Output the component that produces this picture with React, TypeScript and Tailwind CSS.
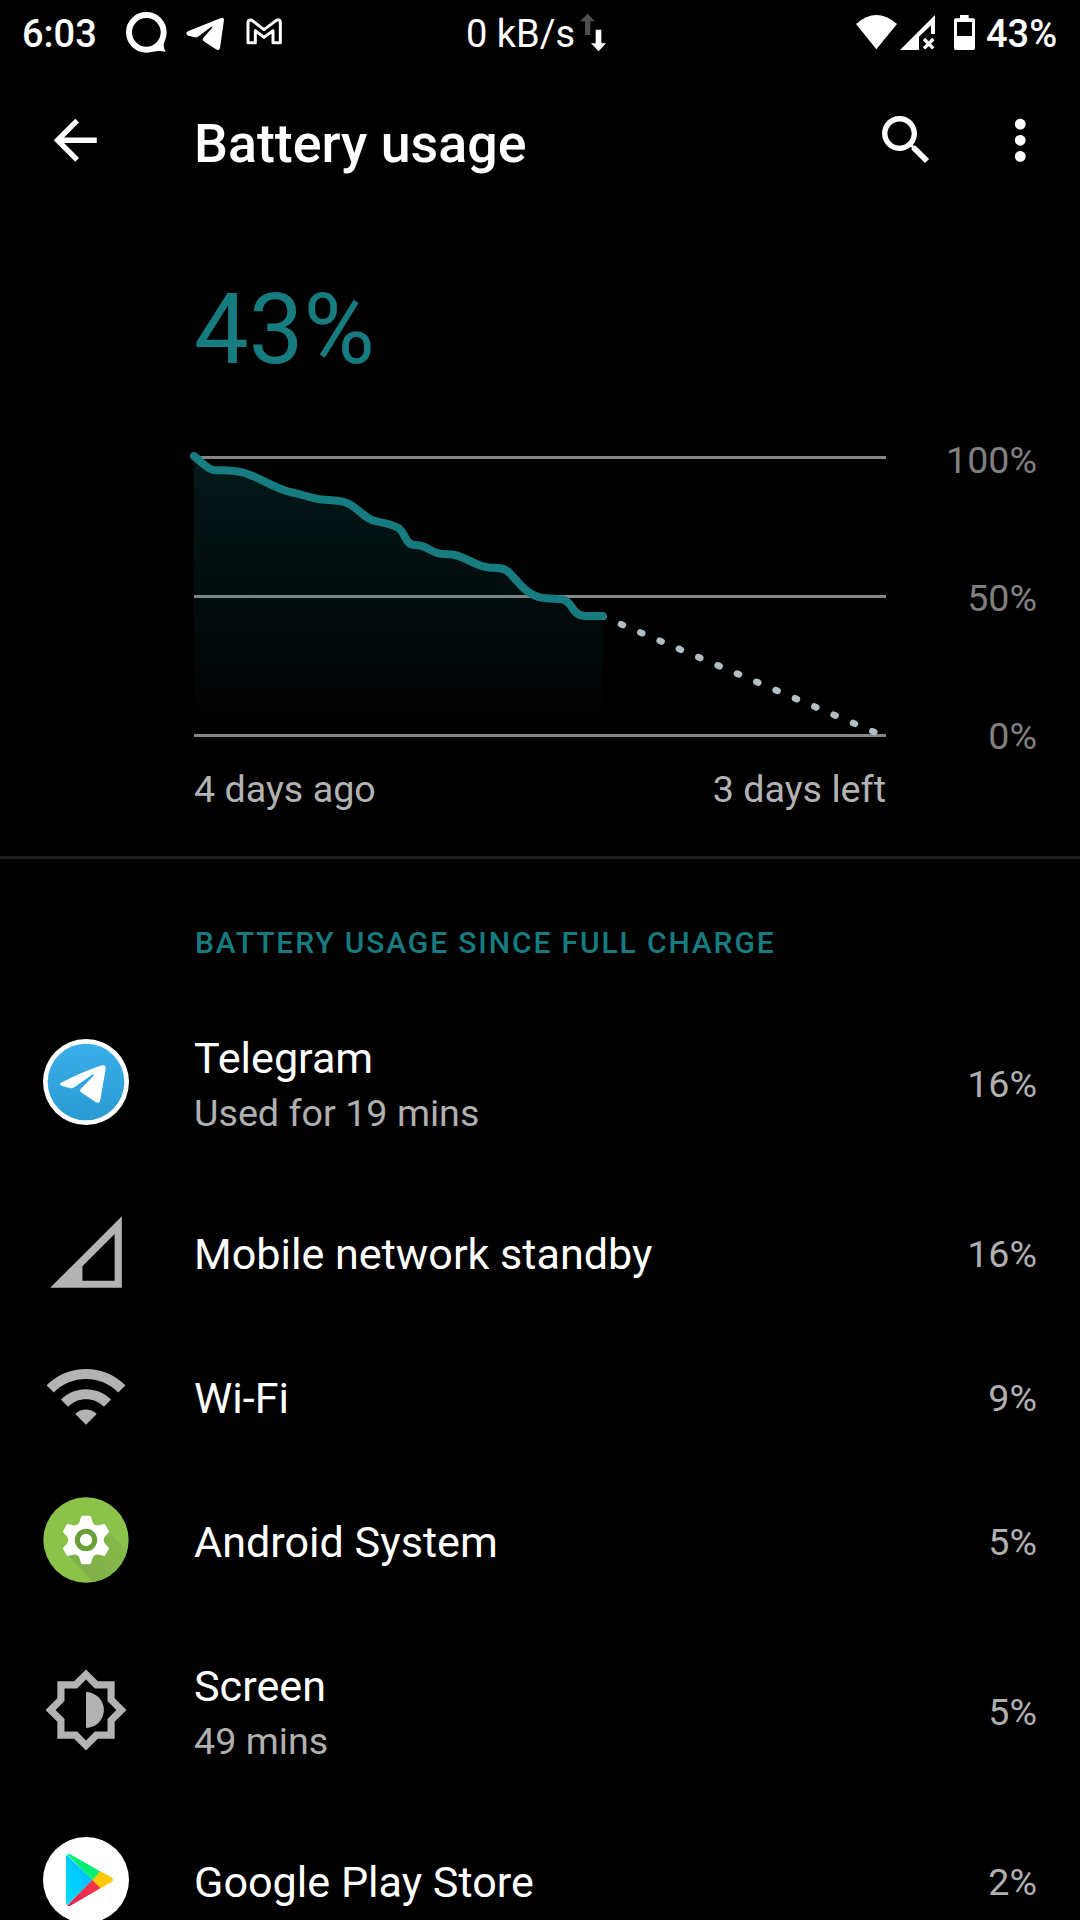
import React from "react";

const PLANE =
  "M560 97 C558 101 560 105 565 107 L585 112 Q591 113 596 109 L633 81 Q640 77 636 84 L609 115 Q606 120 611 124 L650 149 Q658 153 660 144 L672 60 Q672 51 663 54 L567 92 Q562 94 560 97Z";

function StatusBar() {
  return (
    <div className="flex h-[66px] items-center text-[38px] leading-[44px] text-white">
      <div className="ml-[22px] w-[103px] pt-[2px] font-medium">6:03</div>
      <div className="flex w-[341px] gap-[17px]">
        <svg className="h-[44px] w-[42px]" viewBox="375 33 126 132">
          <circle cx="439" cy="97" r="52" fill="none" stroke="#fff" strokeWidth="18" />
          <path d="M494 123 Q487 139 497 155 Q474 151 458 156 L470 133Z" fill="#fff" />
        </svg>
        <svg className="h-[44px] w-[42px]" viewBox="552 33 126 132">
          <path d={PLANE} fill="#fff" />
        </svg>
        <svg className="h-[44px] w-[42px]" viewBox="730 33 126 132">
          <path
            d="M745 67 Q745 60 752 60 L757 61 L793 89 L830 61 Q842 56 842 68 V128 H820 V92 L793 112 L767 92 V128 H745Z"
            fill="none"
            stroke="#fff"
            strokeWidth="9"
            strokeLinejoin="round"
          />
        </svg>
      </div>
      <div className="w-[113px] pt-[2px] whitespace-nowrap">0 kB/s</div>
      <svg className="h-[44px] w-[30px]" viewBox="420 33 90 132">
        <path d="M446 41 L468 64 H454 V105 H438 V64 H423Z" fill="#505050" />
        <path d="M470 89 H487 V130 H501 L479 154 L456 130 H470Z" fill="#fff" />
      </svg>
      <svg className="ml-[245px] h-[44px] w-[124px]" viewBox="102 33 372 132">
        <path d="M108 72 Q169 18 231 72 L169 148Z" fill="#fff" />
        <path d="M345 45 V102 H333 V76 L297 110 V150 H240Z" fill="#fff" />
        <path d="M312 117 L340 145 M340 117 L312 145" stroke="#fff" strokeWidth="10" />
        <path
          fillRule="evenodd"
          d="M420 45 H446 V55 H460 Q465 55 465 60 V145 Q465 150 460 150 H407 Q402 150 402 145 V60 Q402 55 407 55 H420Z M411 66 V108 H456 V66Z"
          fill="#fff"
        />
      </svg>
      <div className="ml-[8px] pt-[2px] font-medium">43%</div>
    </div>
  );
}

function AppBar() {
  return (
    <div className="mt-[2px] flex h-[145px] items-center pr-[28px] pl-[43px] text-white">
      <svg className="h-[64.5px] w-[64.5px]" viewBox="0 0 24 24" fill="currentColor">
        <path d="M20 11H7.83l5.59-5.59L12 4l-8 8 8 8 1.41-1.41L7.83 13H20v-2z" />
      </svg>
      <h1 className="mt-[7px] ml-[86.5px] flex-1 text-[53.75px] leading-[64px] font-medium">Battery usage</h1>
      <svg className="mr-[49px] h-[64.5px] w-[64.5px]" viewBox="0 0 24 24" fill="currentColor">
        <path d="M15.5 14h-.79l-.28-.27C15.41 12.59 16 11.11 16 9.5 16 5.91 13.09 3 9.5 3S3 5.91 3 9.5 5.91 16 9.5 16c1.61 0 3.09-.59 4.23-1.57l.27.28v.79l5 4.99L20.49 19l-4.99-5zm-6 0C7.01 14 5 11.99 5 9.5S7.01 5 9.5 5 14 7.01 14 9.5 11.99 14 9.5 14z" />
      </svg>
      <svg className="h-[64.5px] w-[64.5px]" viewBox="0 0 24 24" fill="currentColor">
        <path d="M12 8c1.1 0 2-.9 2-2s-.9-2-2-2-2 .9-2 2 .9 2 2 2zm0 2c-1.1 0-2 .9-2 2s.9 2 2 2 2-.9 2-2-.9-2-2-2zm0 6c-1.1 0-2 .9-2 2s.9 2 2 2 2-.9 2-2-.9-2-2-2z" />
      </svg>
    </div>
  );
}

const CURVE =
  "M42 48 C65 66 80 86 100 90 C125 92 150 88 190 98 C235 110 280 143 330 156 C370 164 390 173 420 178 C450 182 475 178 503 190 C540 206 550 237 590 244 C620 250 640 254 655 264 C678 280 675 315 705 315 C745 315 750 340 790 342 C820 343 825 343 845 352 C880 366 895 380 930 383 C955 384 965 382 982 393 C1005 410 1030 460 1080 472 C1110 478 1130 475 1150 479 C1180 488 1175 527 1215 528 L1268 528";

function Chart() {
  return (
    <div className="flex h-[322px] justify-between pr-[43px] pl-[194px]">
      <svg className="mt-[19px] h-[281px] w-[692px] overflow-visible" viewBox="42 48 2076 843">
        <defs>
          <linearGradient id="area" gradientUnits="userSpaceOnUse" x1="0" y1="48" x2="0" y2="882">
            <stop offset="0" stopColor="#177c80" stopOpacity="0.2" />
            <stop offset="1" stopColor="#177c80" stopOpacity="0" />
          </linearGradient>
        </defs>
        <path d="M42 52.5H2118M42 469.5H2118M42 886.5H2118" stroke="#868686" strokeWidth="9" />
        <path d={CURVE + " V886 H42Z"} fill="url(#area)" />
        <path
          d="M1265 528 L2106 886"
          stroke="#b0bec5"
          strokeWidth="20"
          strokeLinecap="round"
          strokeDasharray="6 57.05"
        />
        <path d={CURVE} fill="none" stroke="#177c80" strokeWidth="24" strokeLinecap="round" strokeLinejoin="round" />
      </svg>
      <div className="flex flex-col justify-between py-px text-right text-[37.6px] leading-[44px] text-[#808080]">
        <span>100%</span>
        <span>50%</span>
        <span>0%</span>
      </div>
    </div>
  );
}

function TelegramIcon() {
  return (
    <svg className="size-[86px]" viewBox="129 117 258 258">
      <defs>
        <linearGradient id="tg" x1="0" y1="0" x2="0" y2="1">
          <stop offset="0" stopColor="#3aaeea" />
          <stop offset="1" stopColor="#2a9bd3" />
        </linearGradient>
      </defs>
      <circle cx="258" cy="246" r="129" fill="#fff" />
      <circle cx="258" cy="246" r="115" fill="url(#tg)" />
      <path
        d="M182 249 Q177 254 185 257 L208 264 Q217 266 224 261 L275 225 Q287 219 280 228 L242 267 Q237 272 243 277 L288 307 Q299 312 301 299 L317 206 Q318 194 306 196 Q248 215 182 249Z"
        fill="#fff"
      />
    </svg>
  );
}

function SignalIcon() {
  return (
    <svg className="size-[86px]" viewBox="0 0 24 24" fill="#b3b3b3">
      <path fillRule="evenodd" d="M2 22H22V2Z M11 20V16L20 7V20Z" />
    </svg>
  );
}

function WifiIcon() {
  return (
    <svg className="size-[86px]" viewBox="0 0 24 24" fill="#b3b3b3">
      <path d="M1 9l2 2c4.97-4.97 13.03-4.97 18 0l2-2C16.93 2.93 7.08 2.93 1 9zm8 8l3 3 3-3c-1.65-1.66-4.34-1.66-6 0zm-4-4l2 2c2.76-2.76 7.24-2.76 10 0l2-2C15.14 9.14 8.87 9.14 5 13z" />
    </svg>
  );
}

const TEETH = [0, 60, 120, 180, 240, 300];

function AndroidIcon() {
  return (
    <svg className="size-[86px]" viewBox="-129 -129 258 258">
      <defs>
        <clipPath id="disc">
          <circle r="128" />
        </clipPath>
        <linearGradient id="shade" gradientUnits="userSpaceOnUse" x1="0" y1="70" x2="120" y2="20">
          <stop offset="0" stopColor="#7fb04a" />
          <stop offset="1" stopColor="#86ba4a" />
        </linearGradient>
      </defs>
      <circle r="128" fill="#8bc34a" />
      <path d="M66 -28 L170 76 V170 H62 L-54 46Z" fill="url(#shade)" clipPath="url(#disc)" />
      <g fill="#fff">
        <circle r="52" />
        {TEETH.map((a) => (
          <path
            key={a}
            transform={`rotate(${a})`}
            d="M-30 -42 Q-22 -47 -19 -55 L-15 -69 Q-14 -73 -10 -73 H10 Q14 -73 15 -69 L19 -55 Q22 -47 30 -42Z"
          />
        ))}
      </g>
      <circle r="26" fill="none" stroke="#689f38" strokeWidth="15" />
    </svg>
  );
}

function BrightnessIcon() {
  return (
    <svg className="size-[86px]" viewBox="0 0 24 24" fill="#b3b3b3">
      <path
        fillRule="evenodd"
        d="M20 8.69V4h-4.69L12 .69 8.69 4H4v4.69L.69 12 4 15.31V20h4.69L12 23.31 15.31 20H20v-4.69L23.31 12 20 8.69zM18 14.48V18h-3.52L12 20.48 9.52 18H6v-3.52L3.52 12 6 9.52V6h3.52L12 3.52 14.48 6H18v3.52L20.48 12 18 14.48zM12 7v10a5 5 0 0 0 0-10z"
      />
    </svg>
  );
}

function PlayIcon() {
  return (
    <svg className="size-[86px]" viewBox="129 591 258 258">
      <defs>
        <linearGradient id="blue" x1="1" y1="0" x2="0" y2="1">
          <stop offset="0" stopColor="#00b4fa" />
          <stop offset="1" stopColor="#00e1ff" />
        </linearGradient>
        <linearGradient id="red" x1="1" y1="0" x2="0" y2="1">
          <stop offset="0" stopColor="#ff3a44" />
          <stop offset="1" stopColor="#d0205a" />
        </linearGradient>
        <clipPath id="tri">
          <path d="M198 649 Q199 639 209 642 L334 712 Q344 719 334 726 L211 797 Q199 801 198 790Z" />
        </clipPath>
      </defs>
      <circle cx="258" cy="720" r="129" fill="#fff" />
      <g clipPath="url(#tri)">
        <path d="M196 640 L278 720 L196 800Z" fill="url(#blue)" />
        <path d="M196 638 L278 721 L302 695 L204 636Z" fill="#00f076" />
        <path d="M277 720 L301 694 L345 716 V724 L301 746Z" fill="#ffc900" />
        <path d="M196 802 L277 720 L302 745 L206 804Z" fill="url(#red)" />
      </g>
    </svg>
  );
}

const ROWS: { name: string; sub?: string; pct: string; icon: React.ReactNode }[] = [
  { name: "Telegram", sub: "Used for 19 mins", pct: "16%", icon: <TelegramIcon /> },
  { name: "Mobile network standby", pct: "16%", icon: <SignalIcon /> },
  { name: "Wi-Fi", pct: "9%", icon: <WifiIcon /> },
  { name: "Android System", pct: "5%", icon: <AndroidIcon /> },
  { name: "Screen", sub: "49 mins", pct: "5%", icon: <BrightnessIcon /> },
  { name: "Google Play Store", pct: "2%", icon: <PlayIcon /> },
];

export default function App() {
  return (
    <div className="flex h-[1920px] w-[1080px] flex-col overflow-hidden bg-black font-['Roboto',sans-serif] *:shrink-0">
      <StatusBar />
      <AppBar />
      <div className="mt-[61px] pl-[194px] text-[97.4px] leading-[112px] text-[#177c80]">43%</div>
      <div className="h-[51px]" />
      <Chart />
      <div className="mt-[8px] flex h-[44px] justify-between pr-[194px] pl-[194px] text-[37.7px] leading-[44px] text-[#b3b3b3]">
        <span>4 days ago</span>
        <span>3 days left</span>
      </div>
      <div className="mt-[45px] h-[3px] bg-[#1f1f1f]" />
      <div className="flex h-[125px] items-center pt-[43px] pl-[195px]">
        <h2 className="text-[30px] leading-[40px] font-medium tracking-[1.88px] text-[#177c80]">
          BATTERY USAGE SINCE FULL CHARGE
        </h2>
      </div>
      {ROWS.map((r) => (
        <div
          key={r.name}
          className={(r.sub ? "h-[196px]" : "h-[144px]") + " flex items-center pr-[43px] pl-[43px]"}
        >
          {r.icon}
          <div className={(r.sub ? "pt-[3px]" : "pt-[5px]") + " ml-[65px] flex-1"}>
            <div className="text-[43.15px] leading-[58px] text-white">{r.name}</div>
            {r.sub && <div className="text-[37.7px] leading-[50px] text-[#b0b0b0]">{r.sub}</div>}
          </div>
          <div className="pt-[3px] text-[37.6px] leading-[44px] text-[#b0b0b0]">{r.pct}</div>
        </div>
      ))}
    </div>
  );
}
